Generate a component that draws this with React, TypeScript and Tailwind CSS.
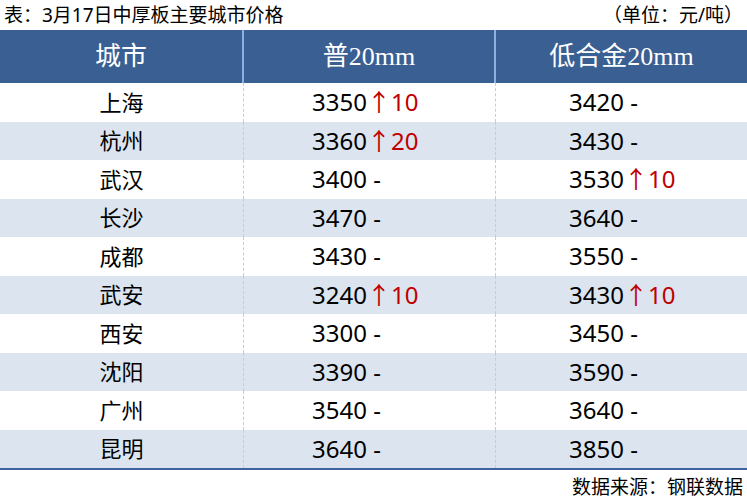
const rows: { city: string; a: string; aUp?: string; b: string; bUp?: string }[] = [
  { city: '上海', a: '3350', aUp: '10', b: '3420' },
  { city: '杭州', a: '3360', aUp: '20', b: '3430' },
  { city: '武汉', a: '3400', b: '3530', bUp: '10' },
  { city: '长沙', a: '3470', b: '3640' },
  { city: '成都', a: '3430', b: '3550' },
  { city: '武安', a: '3240', aUp: '10', b: '3430', bUp: '10' },
  { city: '西安', a: '3300', b: '3450' },
  { city: '沈阳', a: '3390', b: '3590' },
  { city: '广州', a: '3540', b: '3640' },
  { city: '昆明', a: '3640', b: '3850' },
]

const sans = { fontFamily: '"Noto Sans", "Noto Sans CJK SC", sans-serif' }

function Price({ value, up }: { value: string; up?: string }) {
  if (up) {
    return (
      <span>
        {value}
        <span className="text-[#c00000]">↑{up}</span>
      </span>
    )
  }
  return <span>{value} -</span>
}

export default function App() {
  return (
    <div className="w-[747px] h-[500px] bg-white text-black" style={sans}>
      <div className="h-[30px] flex items-center justify-between px-[4px] text-[19px]">
        <span>表：3月17日中厚板主要城市价格</span>
        <span>（单位：元/吨）</span>
      </div>

      <div
        className="h-[53px] bg-[#3a5f92] text-white grid grid-cols-[244px_252px_1fr] text-[26px]"
        style={{ fontFamily: '"Liberation Serif", "Noto Sans CJK SC", serif' }}
      >
        <div className="flex items-center justify-center border-r-2 border-[#8eb0df]">城市</div>
        <div className="flex items-center justify-center border-r-2 border-[#8eb0df]">普20mm</div>
        <div className="flex items-center justify-center">低合金20mm</div>
      </div>

      <div className="border-b-2 border-[#3f62a0]">
        {rows.map((r, i) => (
          <div
            key={r.city}
            className={`h-[38.5px] grid grid-cols-[244px_252px_1fr] ${i % 2 === 1 ? 'bg-[#dbe4ef]' : 'bg-white'}`}
          >
            <div className="flex items-center justify-center text-[22px] border-r border-dashed border-[#c8ccd2]">{r.city}</div>
            <div className="flex items-center pl-[68px] text-[24px] border-r border-dashed border-[#c8ccd2]">
              <Price value={r.a} up={r.aUp} />
            </div>
            <div className="flex items-center pl-[73px] text-[24px]">
              <Price value={r.b} up={r.bUp} />
            </div>
          </div>
        ))}
      </div>

      <div className="flex justify-end pr-[4px] pt-[3px] text-[19px]">数据来源：钢联数据</div>
    </div>
  )
}
